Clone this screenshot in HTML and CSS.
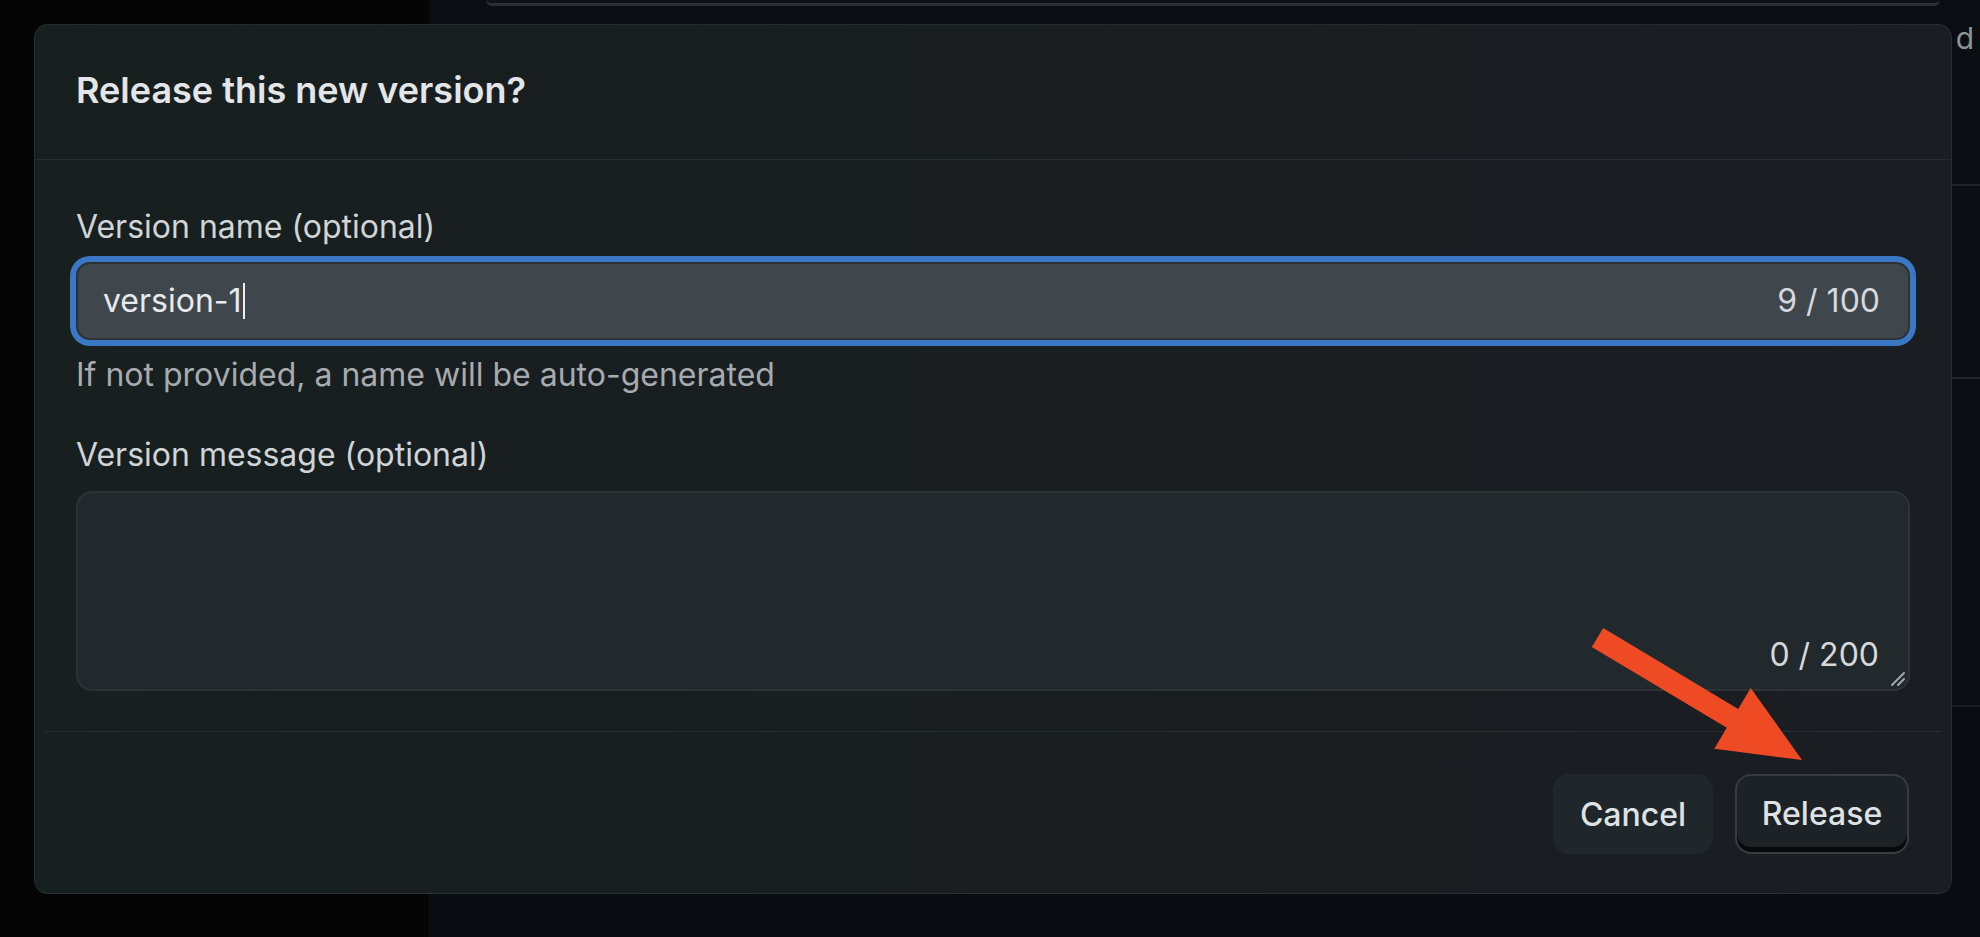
FILE: index.html
```html
<!DOCTYPE html>
<html lang="en">
<head>
<meta charset="utf-8">
<title>Release this new version?</title>
<link rel="stylesheet" href="styles.css">
</head>
<body>
<div class="app">
  <div class="side"></div>
  <div class="panel">
    <div class="panel-top"></div>
    <div class="panel-rows">
      <div class="prow prow-head"><span class="prow-text">d</span></div>
      <div class="prow prow-mid"></div>
      <div class="prow prow-tall"></div>
      <div class="prow prow-rest"></div>
    </div>
  </div>
</div>

<div class="dialog" role="dialog" aria-labelledby="dlg-title">
  <div class="dialog-header">
    <h2 class="dialog-title" id="dlg-title">Release this new version?</h2>
  </div>
  <div class="dialog-body">
    <label class="field-label">Version name (optional)</label>
    <div class="text-input is-focused">
      <span class="input-value">version-1<span class="caret"></span></span>
      <span class="counter">9 / 100</span>
    </div>
    <p class="helper">If not provided, a name will be auto-generated</p>
    <label class="field-label field-label-2">Version message (optional)</label>
    <div class="text-area">
      <span class="counter">0 / 200</span>
      <svg class="grip" width="18" height="18" viewBox="0 0 18 18"><path d="M16 4 L4 16 M16 10 L10 16" stroke="#a3a8ad" stroke-width="2" stroke-linecap="round" fill="none"/></svg>
    </div>
  </div>
  <div class="dialog-footer">
    <button class="btn btn-ghost" type="button">Cancel</button>
    <button class="btn btn-primary" type="button">Release</button>
  </div>
</div>

<svg class="annotation" width="1980" height="937" viewBox="0 0 1980 937">
  <polygon points="1603.2,628.1 1738.2,709.0 1750.7,688.0 1802,760 1714.3,748.8 1726.8,727.8 1591.8,646.9" fill="#ee4a24"/>
</svg>
</body>
</html>
```

FILE: styles.css
```css
* { box-sizing: border-box; }

html, body {
  margin: 0;
  padding: 0;
  width: 1980px;
  height: 937px;
  overflow: hidden;
  background: #050505;
  font-family: Inter, "Noto Sans", sans-serif;
}

.app {
  display: flex;
  width: 1980px;
  height: 937px;
}

.side {
  width: 429px;
  flex: none;
  background: #050505;
}

.panel {
  flex: 1;
  display: flex;
  flex-direction: column;
  background: #0a0e13;
  border-bottom-left-radius: 26px;
}

.panel-top {
  height: 6px;
  margin: 0 40px 0 57px;
  background: #0d1117;
  border-bottom: 3px solid #2a2f36;
  border-radius: 0 0 12px 12px;
}

.panel-rows {
  flex: 1;
  display: flex;
  flex-direction: column;
}

.prow {
  border-bottom: 2px solid #1f2429;
  display: flex;
  justify-content: flex-end;
}

.prow-head {
  height: 180px;
  padding: 14px 6px 0 0;
}

.prow-text {
  color: #8d9297;
  font-size: 30px;
  line-height: 36px;
}

.prow-mid { height: 193px; background: #0b0f14; }
.prow-tall { height: 328px; background: #0a0d11; border-bottom-color: #181c20; }
.prow-rest { flex: 1; border-bottom: none; background: #090c10; }

/* Dialog */
.dialog {
  position: absolute;
  left: 34px;
  top: 24px;
  width: 1918px;
  height: 870px;
  display: flex;
  flex-direction: column;
  border: 1px solid #252c2e;
  border-bottom-color: #2c3335;
  border-radius: 14px;
  background: linear-gradient(90deg, #171f1f 0%, #191e20 40%, #1a1d21 100%);
}

.dialog-header {
  height: 135px;
  flex: none;
  display: flex;
  align-items: center;
  padding: 0 40px 4px 41px;
  border-bottom: 1px solid #262d30;
}

.dialog-title {
  margin: 0;
  font-size: 36px;
  font-weight: 600;
  line-height: 44px;
  color: #e3e5e7;
}

.dialog-body {
  display: flex;
  flex-direction: column;
  padding: 47px 41px 40px 41px;
}

.field-label {
  display: block;
  font-size: 32px;
  line-height: 40px;
  color: #d1d4d7;
  margin-bottom: 15px;
}

.field-label-2 { margin-bottom: 16px; }

.text-input {
  height: 78px;
  display: flex;
  align-items: center;
  justify-content: space-between;
  padding: 0 28px 0 25px;
  background: #40474c;
  border: 2px solid #2b3135;
  border-radius: 14px;
  font-size: 32px;
  color: #e8eaec;
}

.text-input.is-focused {
  box-shadow: 0 0 0 6px #3a77c7;
}

.input-value {
  display: inline-flex;
  align-items: center;
  line-height: 40px;
}

.caret {
  display: inline-block;
  width: 2px;
  height: 36px;
  margin-left: 1px;
  background: #eceef0;
}

.counter {
  font-size: 32px;
  line-height: 40px;
  color: #d6d9dc;
}

.helper {
  margin: 15px 0 40px;
  font-size: 32px;
  line-height: 40px;
  color: #a7abb0;
}

.text-area {
  position: relative;
  height: 200px;
  display: flex;
  justify-content: flex-end;
  align-items: flex-end;
  padding: 0 29px 14px;
  background: #22292d;
  border: 2px solid #2c3336;
  border-radius: 16px;
}

.grip {
  position: absolute;
  right: 2px;
  bottom: 2px;
}

.dialog-footer {
  flex: 1;
  display: flex;
  justify-content: flex-end;
  align-items: flex-start;
  gap: 22px;
  margin: 0 10px;
  padding: 42px 32px 0 0;
  border-top: 1px solid #243030;
}

.btn {
  height: 80px;
  border-radius: 16px;
  font-family: Inter, "Noto Sans", sans-serif;
  font-size: 32px;
  font-weight: 500;
  color: #dfe2e5;
  cursor: pointer;
}

.btn-ghost {
  width: 160px;
  background: #20272b;
  border: none;
}

.btn-primary {
  width: 174px;
  background: #1c2226;
  border: 2px solid #363d41;
  box-shadow: inset 0 -5px 0 #07090a;
  padding-bottom: 2px;
}

.annotation {
  position: absolute;
  left: 0;
  top: 0;
  pointer-events: none;
}
```
